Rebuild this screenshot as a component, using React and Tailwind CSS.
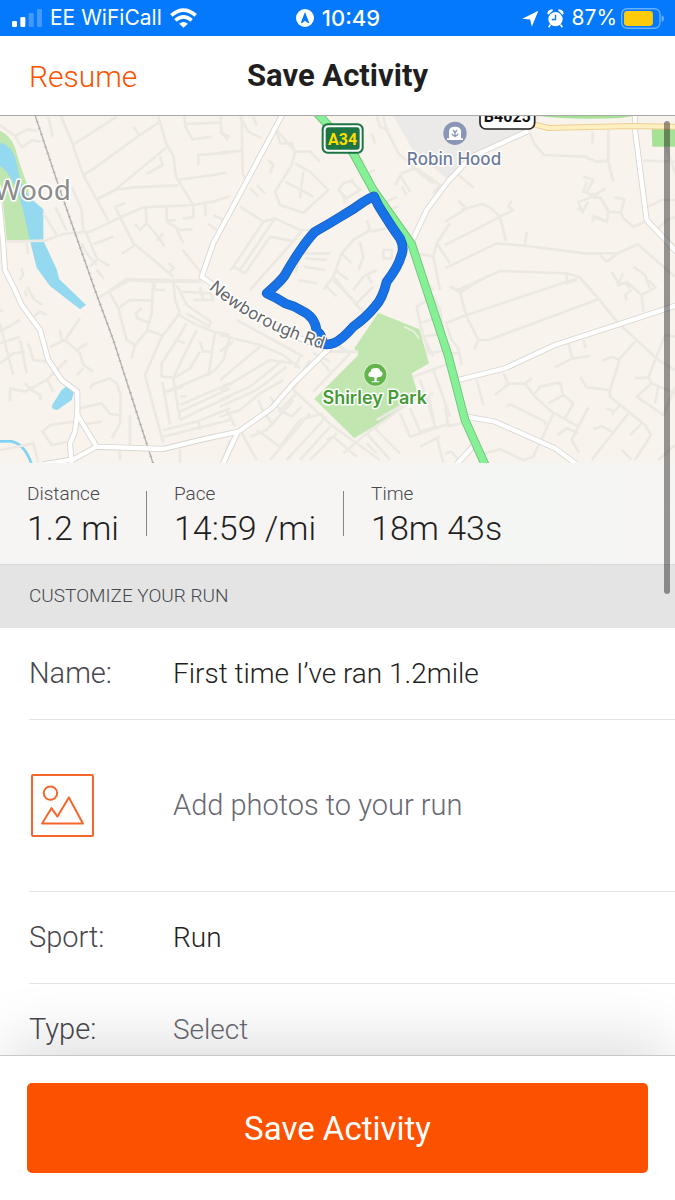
import React, { useState } from "react";

// All map geometry is in thirds of a pixel, grouped by map tile
const TILES = [
  {
    x: 0,
    y: -18,
    roads: [
      "M0 45L45 78L82 58L112 62M45 78L65 112L98 90L122 96M145 20L158 80",
      "M180 10L215 95L250 195L290 268L325 332M218 105L350 20M250 195L290 170L420 75L475 38",
      "M400 50L418 75M475 20L500 105L520 135L528 200L578 282M505 108L345 240L290 268",
      "M290 268L345 240L400 232L535 226M530 210L640 195L680 188M440 192L488 165L480 140",
      "M553 20L556 50L578 88L635 80M556 42L662 38M662 20L665 70L690 80M595 165L595 135L690 128",
      "M20 395L135 392L190 372L270 365L355 325L430 292L580 285L640 275L690 258",
      "M130 310L170 375M165 290L200 362M215 230L245 300L250 365M345 290L375 280M345 290L365 330L400 400L455 445L520 500",
      "M437 292L440 340L420 360L405 342M440 340L470 375L495 410M490 370L470 392M500 292L500 335L540 360L578 358M505 332L528 330",
      "M580 285L580 322L548 326M615 275L617 320M640 315L680 335M625 342L650 360M530 358L550 400M365 432L405 405",
      "M258 368L290 445L328 468M280 403L340 380M245 400L260 430L290 465M290 450L270 470M290 480L312 505M548 420L605 490",
      "M330 540L378 508L605 512M505 460L522 475L505 490M462 512L465 540M80 400L84 432M65 475L70 495L58 510",
    ],
  },
  {
    x: 0,
    y: 492,
    roads: [
      "M300 50L390 0M380 0L462 5L605 5M460 5L455 100L440 155L405 195M330 40L355 85L380 180L405 195L395 235M355 85L390 60L460 62M465 30L495 30",
      "M425 85L408 100L412 115L450 130M440 150L485 165M485 170L435 285L490 490M520 0L525 60L540 100L485 170",
      "M530 15L560 75L632 125L628 140L560 100M530 100L580 130L640 155L690 165M560 130L530 180L485 250L485 290L520 292",
      "M590 150L545 240L520 295L570 265L600 215M530 180L555 190M645 155L625 290M600 185L610 215L632 215M690 170L670 240L640 275L560 310L495 335",
      "M520 295L540 420M487 305L510 435M500 335L550 320M540 350L560 348M540 375L690 310M540 395L690 325M540 420L600 390L690 350M490 450L590 425L690 385M595 420L600 450M490 470L690 420",
      "M0 155L60 120M0 190L60 170M0 250L40 220L75 215M0 130L20 210L40 285M60 180L80 280M85 190L100 240L145 245",
      "M80 20L105 60L128 75M100 55L85 25M100 110L120 95L140 105M75 30L80 50M30 365L30 325L75 335L140 300L200 240M75 310L95 330L120 345L122 360M140 295L160 335",
      "M240 115L195 180L150 200M180 150L185 180M195 180L240 220L250 255L280 275M230 210L262 190M250 265L230 285M270 325L280 312L330 295L350 310L362 345L360 430L335 475",
      "M235 385L305 370L330 402L360 405M390 405L390 495M235 435L305 425M225 425L150 435L128 455L155 495L205 485M0 510L80 495L100 490L115 548M360 510L360 540M540 508L540 548",
      "M600 20L610 60M0 90L10 95M690 480L665 548M580 60L640 60L632 40L540 35",
    ],
  },
  {
    x: 660,
    y: -18,
    roads: [
      "M65 20L68 190L80 215M0 128L68 122M0 65L25 90M60 20L85 65L125 85M100 20L110 45M170 60L225 125L215 165L165 245L180 285L250 308L325 240L270 185L225 160",
      "M170 60L180 100L215 100L225 125L270 125L300 155M250 185L240 265M195 215L280 260M145 150L160 165L150 190M90 235L115 260M110 225L135 250",
      "M355 240L370 220L400 210M355 240L380 265L420 240L390 210M370 255L375 280M400 130L430 155M440 190L465 180M490 20L500 60L535 130L600 190L640 220M470 20L480 50L505 60",
      "M525 225L545 190L585 175M540 195L570 245M590 175L660 225L640 250M545 230L560 255M455 70L465 100M490 280L530 260M500 300L535 290",
      "M60 290L130 335L40 470L75 490M130 335L165 325L240 360L280 360M165 325L60 480M245 365L90 540M75 490L150 380L225 395M40 470L30 480",
      "M245 430L330 430M255 445L320 450M250 470L315 480M235 510L290 520M225 490L245 430M440 330L450 360L400 390L365 430L340 500L310 540M450 365L500 355",
      "M365 430L395 460M345 480L385 510M340 500L370 535M420 395L430 440L415 480M490 420L515 420L515 445L490 445ZM440 490L455 520M400 540L430 500L470 480",
      "M590 430L640 440L650 400L690 340M650 400L690 460M640 440L660 540M600 500L640 540",
    ],
  },
  {
    x: 660,
    y: 492,
    roads: [
      "M50 120L160 180L250 230M70 90L130 120M0 165L120 195L190 225L240 265M0 215L40 185M240 230L225 265M0 300L120 200M0 330L150 240L215 250M0 360L90 320L190 240M0 380L110 330L200 260",
      "M0 410L60 390L120 340L190 300M20 390L45 440M270 240L240 290L220 330L340 440L480 540M330 245L280 220M300 240L330 275M280 335L390 220L345 190M320 215L415 215",
      "M150 350L180 390L215 410M215 410L245 380M115 360L130 395L160 435M230 340L175 395M60 450L110 540M110 450L180 500L240 420L310 400M150 540L270 400M200 540L320 410M90 470L140 450L220 360",
      "M240 540L330 440M270 540L350 460M320 480L340 470L410 530M370 520L440 460L580 360L640 340M470 420L600 345M440 460L510 540M460 440L540 520M540 400L570 470L690 430",
      "M570 385L600 455L645 440L625 345M600 300L640 420M580 290L690 250M640 270L690 410M590 80L640 50L660 90L670 160L610 170L600 130ZM600 130L660 110M615 180L625 220L680 210M610 170L640 230",
      "M370 30L410 70L460 20M340 0L380 40M320 20L350 50M400 65L430 95M650 470L670 548M600 500L660 470M440 490L470 520",
    ],
  },
  {
    x: 1335,
    y: -18,
    roads: [
      "M255 70L270 105L298 135L420 140L455 155L490 152M443 65L443 100M490 60L490 155L505 215M40 195L88 235M0 335L65 295L110 282L135 292L165 320L183 395",
      "M40 272L60 290M65 295L50 300M0 405L80 365L165 320L205 300L190 290L200 272M0 475L155 400L245 408L420 430L518 430L578 403L690 500M245 365L240 405M518 430L485 455L465 435",
      "M15 530L40 540L165 483L365 490L402 500L440 540M365 490L365 520L395 505M415 200L445 210L425 245L440 262L465 262L490 300L485 340M425 215L415 245L450 255L482 235",
      "M440 262L400 275L410 300L395 295M410 310L430 275M465 262L490 305L528 308L538 268L508 262M440 318L485 335L455 320L440 335M528 308L535 325L565 350L600 335",
      "M595 152L690 155M610 290L650 270L690 270M640 355L665 330L690 322M665 110L690 190M500 485L520 520L535 490M520 520L540 520L555 535M565 470L600 495L615 535M600 495L580 480",
    ],
  },
  {
    x: 1335,
    y: 492,
    roads: [
      "M15 20L45 38L105 0M45 38L65 110L100 180L88 208M0 130L65 105L365 5L390 0M100 180L130 180L460 58M410 0L460 55L520 130L640 240L690 270M395 0L360 10",
      "M5 135L20 180L40 205L50 255M20 220L40 220M95 300L115 375M175 280L190 312L150 345M190 312L240 310L262 295M240 310L270 350L320 395L400 440L380 480L402 518",
      "M370 190L382 235L330 262M382 235L435 228M415 180L422 205M570 185L525 235L495 330L425 322L405 290M525 240L500 230L472 242M495 330L495 350L600 435L618 465L570 540",
      "M270 340L285 320L345 308L355 345L310 370M355 345L385 370L360 415M185 380L195 372L300 425L300 435M325 400L265 530L235 540L165 508L100 525M430 382L400 440M400 460L365 445L338 465",
      "M550 400L440 540M500 455L470 438L445 448M525 375L500 405M485 385L510 395M590 430L555 465M530 510L560 540M570 295L610 292L660 165L690 170M610 292L620 310L575 350L655 405L690 320",
      "M620 310L690 340M640 320L630 370M515 0L520 18L545 5L590 45L595 95M590 45L632 22L610 0M560 30L540 45L545 60M0 520L20 515L40 540M0 380L10 438L50 430M640 540L690 495",
    ],
  },
];

const STREETS = [
  "M-2 262L8 362L15 462L45 522L65 567L120 642L145 732L185 792L232 827L232 892L225 947L210 982L215 1045",
  "M232 897L290 992L490 999L600 972L715 947L815 877L880 802L990 695",
  "M290 992L220 1030L130 1045",
  "M712 950L668 1045",
  "M848 -6L640 382L605 482L680 535L830 640L985 700",
  "M1585 45L1415 122L1345 195L1280 282L1238 372",
  "M1905 -6L1905 42L1940 312L2030 408",
  "M1370 793L1515 757L1665 687L1865 622L2030 568",
  "M1405 903L1485 917L1665 997L1730 1045",
  "M1425 985L1370 1045",
];

const A34_PATH =
  "M950 -10L1060 112L1120 222L1235 385L1280 522L1345 720L1395 912L1457 1050";
const ROUTE_PATH =
  "M970 684Q966 655 950 645Q945 602 905 584Q880 568 855 562Q830 545 800 532Q838 500 853 480Q878 436 900 404Q925 368 945 347Q985 325 1030 297Q1060 280 1090 258Q1108 246 1122 241Q1134 270 1150 292Q1180 340 1200 367Q1214 395 1204 418Q1194 455 1160 497Q1148 548 1125 572Q1098 605 1060 632Q1025 672 1002 681Q985 688 970 684Z";

const RunMap = () => (
  <svg
    viewBox="0 0 2025 1041"
    className="block w-full h-auto bg-[#f8f4ed]"
    role="img"
    aria-label="Route map"
  >
    {/* Land and water */}
    <path d="M1180 0H1620L1590 45L1415 120L1345 192L1240 105Z" fill="#ebeae8" />
    <path d="M0 44Q32 58 45 95Q60 150 85 215L95 374H20L8 250L0 240Z" fill="#bfe6ae" />
    <path d="M1615 0H1905L1860 6Q1720 12 1615 0Z" fill="#a5e295" />
    <path d="M1955 37H2025V92H1957Z" fill="#a5e295" />
    <path
      d="M0 80Q40 90 50 142Q60 210 90 245L130 280V374L170 460L178 490L225 535L258 567L240 580L150 510L110 455L85 355Q65 250 42 205Q20 160 0 150Z"
      fill="#94d9f0"
    />
    <path d="M200 810L222 827L215 852L172 882Q152 880 157 866L185 822Z" fill="#94d9f0" />
    <path d="M0 976H35Q75 985 95 1045" fill="none" stroke="#84d2f1" strokeWidth="8" />
    <path
      d="M1135 590L1258 640L1287 742L1235 772L1255 840L1210 877L1063 967L943 849L1075 717L1063 697Z"
      fill="#c1e6b0"
    />
    <path d="M1212 632L1240 645L1258 668" fill="none" stroke="#e6efd9" strokeWidth="6" />

    {/* Side streets */}
    {TILES.map((tile) => (
      <g
        key={`${tile.x}-${tile.y}`}
        transform={`translate(${tile.x} ${tile.y})`}
        fill="none"
        stroke="#ece8e2"
        strokeWidth="8"
        strokeLinejoin="round"
      >
        {tile.roads.map((d) => (
          <path key={d} d={d} />
        ))}
      </g>
    ))}

    {/* Railway */}
    <g fill="none" stroke="#b3afab">
      <path d="M105 -3L180 222L285 522L340 672L460 1045" strokeWidth="4" />
      <path d="M105 -3L180 222L285 522L340 672L460 1045" strokeWidth="8" strokeDasharray="3 17" />
    </g>

    {/* Main streets */}
    <g fill="none" stroke="#d8d4cf" strokeWidth="18" strokeLinejoin="round">
      {STREETS.map((d) => (
        <path key={d} d={d} />
      ))}
    </g>
    <g fill="none" stroke="#ffffff" strokeWidth="13" strokeLinejoin="round">
      {STREETS.map((d) => (
        <path key={d} d={d} />
      ))}
    </g>
    <g fill="none">
      <path d="M1590 22L1645 36L1895 30L2030 32" stroke="#efcf94" strokeWidth="18" />
      <path d="M1590 22L1645 36L1895 30L2030 32" stroke="#fff0c2" strokeWidth="12" />
      <path d={A34_PATH} stroke="#6fbf77" strokeWidth="26" />
      <path d={A34_PATH} stroke="#86f096" strokeWidth="21" />
    </g>

    {/* Recorded route */}
    <g fill="none" strokeLinejoin="round">
      <path d={ROUTE_PATH} stroke="#1a5cb8" strokeWidth="29" />
      <path d={ROUTE_PATH} stroke="#1672e6" strokeWidth="25" />
    </g>

    {/* Road signs */}
    <rect x="965" y="22" width="126" height="91" rx="18" fill="#1d7544" />
    <rect x="971" y="28" width="114" height="79" rx="13" fill="#ffffff" />
    <rect x="977" y="34" width="102" height="67" rx="9" fill="#1d7544" />
    <text
      x="1028"
      y="86"
      textAnchor="middle"
      fontSize="48"
      className="font-bold font-['Liberation_Sans_Narrow','Roboto',sans-serif]"
      fill="#ffdd00"
    >
      A34
    </text>
    <rect x="1440" y="-50" width="164" height="89" rx="18" fill="#ffffff" stroke="#222" strokeWidth="5" />
    <text
      x="1522"
      y="17"
      textAnchor="middle"
      fontSize="48"
      className="font-bold font-['Liberation_Sans_Narrow','Roboto',sans-serif]"
      fill="#111"
    >
      B4025
    </text>

    {/* Places */}
    <circle cx="1365" cy="52" r="35" fill="#8996b5" />
    <path d="M1347 67V46Q1347 32 1365 32Q1383 32 1383 46V67H1389V72H1341V67Z" fill="#fff" />
    <path
      d="M1365 64V50M1356 53Q1358 60 1365 60Q1372 60 1374 53M1359 42L1365 50L1371 42"
      fill="none"
      stroke="#8996b5"
      strokeWidth="4"
    />
    <circle cx="1126" cy="776" r="36" fill="#d9f0cc" />
    <circle cx="1126" cy="776" r="33" fill="#62b44c" />
    <path
      d="M1123 796V784L1114 783Q1104 784 1105 775Q1106 768 1112 767Q1113 756 1124 757Q1138 753 1141 765Q1150 768 1147 777Q1144 784 1136 783L1130 785V796H1138V799H1115V796Z"
      fill="#fff"
    />
    <path id="newborough" d="M626 518Q770 644 1010 712" fill="none" />
    <g
      stroke="#ffffff"
      strokeWidth="9"
      strokeLinejoin="round"
      className="font-['Inter',sans-serif] font-normal [paint-order:stroke]"
    >
      <text x="213" y="251" textAnchor="end" fontSize="84" fill="#8d8d8d" className="font-['Noto_Sans',sans-serif]">
        Wood
      </text>
      <text x="1362" y="146" textAnchor="middle" fontSize="51" fill="#6c7a99" className="font-medium">
        Robin Hood
      </text>
      <text x="1124" y="864" textAnchor="middle" fontSize="54" fill="#469a35" className="font-semibold">
        Shirley Park
      </text>
      <text fontSize="51" fill="#66666a">
        <textPath href="#newborough">Newborough Rd</textPath>
      </text>
    </g>
  </svg>
);

const StatusBar = () => (
  <div className="shrink-0 h-9 bg-[#0579fb] text-white pl-3 pr-[11px] flex items-center justify-between font-['Inter',sans-serif] text-[21px] font-normal">
    <div className="flex-1 flex items-center gap-2">
      <svg viewBox="0 0 90 54" className="w-[30px] h-[18px]" fill="#fff">
        <rect x="0" y="36" width="15" height="18" rx="4" />
        <rect x="25" y="24" width="15" height="30" rx="4" />
        <rect x="50" y="12" width="15" height="42" rx="4" opacity=".25" />
        <rect x="75" y="0" width="15" height="54" rx="4" opacity=".25" />
      </svg>
      <span>EE WiFiCall</span>
      <svg viewBox="0 0 80 58" className="w-[27px] h-5" fill="none" stroke="#fff" strokeWidth="11">
        <path d="M4 21Q40 -10 76 21" />
        <path d="M16 36Q40 15 64 36" />
        <path d="M40 58L27 46Q40 35 53 46Z" fill="#fff" stroke="none" />
      </svg>
    </div>
    <div className="flex items-center gap-2 text-[22px] font-medium">
      <svg viewBox="0 0 52 52" className="w-[18px] h-[18px]">
        <circle cx="26" cy="26" r="26" fill="#fff" />
        <path d="M26 9L38 40L35 41L26 34L17 41L14 40Z" fill="#0579fb" />
      </svg>
      <span>10:49</span>
    </div>
    <div className="flex-1 flex items-center justify-end gap-2">
      <svg viewBox="0 0 52 52" className="w-[17px] h-[17px]">
        <path d="M50 2L30 51L25 29L1 27Z" fill="#fff" />
      </svg>
      <svg viewBox="0 0 50 56" className="w-[17px] h-[19px]" fill="#fff">
        <circle cx="25" cy="30" r="21" />
        <path d="M1 14Q2 2 15 1L18 4L4 17ZM49 14Q48 2 35 1L32 4L46 17Z" />
        <path d="M10 46L5 54M40 46L45 54" stroke="#fff" strokeWidth="5" />
        <path d="M25 17V31H14" fill="none" stroke="#0579fb" strokeWidth="4" />
      </svg>
      <span className="flex items-center gap-1">
        87%
        <svg viewBox="0 0 128 62" className="w-[43px] h-[21px]">
          <rect x="2" y="2" width="114" height="58" rx="16" fill="none" stroke="#69b0ff" strokeWidth="4" />
          <rect x="9" y="9" width="86" height="44" rx="9" fill="#fdcb0a" />
          <path d="M121 21Q128 24 128 31Q128 38 121 41Z" fill="#69b0ff" />
        </svg>
      </span>
    </div>
  </div>
);

const PhotoIcon = () => (
  <svg
    viewBox="0 0 188 188"
    className="w-[63px] h-[63px]"
    fill="none"
    stroke="#f3672d"
    strokeWidth="6"
    strokeLinejoin="round"
  >
    <rect x="3" y="3" width="182" height="182" rx="3" />
    <circle cx="58" cy="57" r="20" />
    <path d="M33 148L61 102L79 127L113 70L155 148Z" />
  </svg>
);

const stats = [
  { label: "Distance", value: "1.2 mi" },
  { label: "Pace", value: "14:59 /mi" },
  { label: "Time", value: "18m 43s" },
];

const Row = ({ label, id, children }) => (
  <div className="ml-[29px] h-[92px] border-b border-[#e3e3e8] flex items-center">
    <label htmlFor={id} className="w-36 shrink-0 text-[29px] text-[#48484d]">
      {label}
    </label>
    {children}
  </div>
);

const App = () => {
  const [name, setName] = useState("First time I’ve ran 1.2mile");

  return (
    <div className="h-screen flex flex-col overflow-hidden bg-white font-['Roboto',sans-serif] font-[350] text-[28px] text-[#1f1f22]">
      <StatusBar />

      {/* Header */}
      <header className="shrink-0 h-20 px-[29px] pt-[2px] border-b border-[#a9a9a9] grid grid-cols-[1fr_auto_1fr] items-center">
        <button className="justify-self-start text-[30px] text-[#fc5200]">
          Resume
        </button>
        <h1 className="text-[31px] font-bold">Save Activity</h1>
      </header>

      <div className="relative flex-1 min-h-0">
        <main className="h-full overflow-y-auto [scrollbar-width:none]">
          <RunMap />

          {/* Stats */}
          <dl className="h-[101px] bg-linear-to-r from-[#f6f5f4] from-60% via-[#f3f6f2] via-78% to-[#f6f5f4] to-95% flex items-center">
            {stats.map((stat, idx) => (
              <div key={stat.label} className="flex items-center">
                {idx > 0 && <div className="w-px h-[45px] bg-[#858588]" />}
                <div className="px-[27px] pt-1">
                  <dt className="text-[19px] leading-6 text-[#48484d]">
                    {stat.label}
                  </dt>
                  <dd className="text-[34px] leading-11">{stat.value}</dd>
                </div>
              </div>
            ))}
          </dl>

          {/* Form */}
          <h2 className="h-16 px-[29px] bg-[#e4e4e5] border-t border-[#dadadb] flex items-center text-[19px] text-[#48484d]">
            CUSTOMIZE YOUR RUN
          </h2>
          <Row label="Name:" id="name">
            <input
              id="name"
              value={name}
              onChange={(e) => setName(e.target.value)}
              className="flex-1 min-w-0 outline-none"
            />
          </Row>
          <button className="block w-full pl-[29px] text-left text-[29px] text-[#686873]">
            <span className="h-[172px] border-b border-[#e3e3e8] flex items-center">
              <span className="w-36 shrink-0 pl-[2px]">
                <PhotoIcon />
              </span>
              Add photos to your run
            </span>
          </button>
          <Row label="Sport:" id="sport">
            <select id="sport" className="flex-1 min-w-0 appearance-none outline-none">
              <option>Run</option>
              <option>Ride</option>
              <option>Walk</option>
            </select>
          </Row>
          <Row label="Type:" id="type">
            <select id="type" className="flex-1 min-w-0 appearance-none outline-none text-[#686873]">
              <option>Select</option>
              <option>Race</option>
              <option>Long Run</option>
              <option>Workout</option>
            </select>
          </Row>
        </main>
        {/* Scroll indicator */}
        <div className="absolute top-[5px] right-[5px] w-[6px] h-[473px] rounded-full bg-black/40" />
      </div>

      {/* Footer */}
      <footer className="relative shrink-0 px-[27px] py-[27px] border-t border-[#c8c8cb] bg-white shadow-[0_-24px_60px_-8px_rgba(0,0,0,0.13)]">
        <button className="w-full h-[90px] pt-[2px] rounded-[5px] bg-[#fc5200] text-[33px] font-normal text-white">
          Save Activity
        </button>
      </footer>
    </div>
  );
};

export default App;
